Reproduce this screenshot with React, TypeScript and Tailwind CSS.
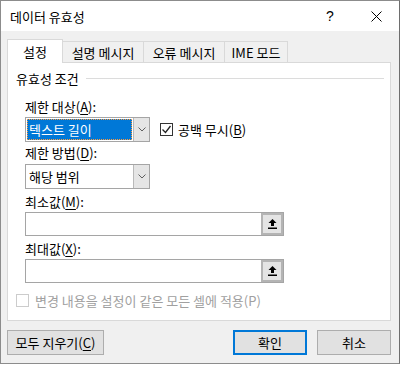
import React from "react";

const font = "font-['Malgun_Gothic','Noto_Sans_CJK_KR',sans-serif]";

function Key({ k }: { k: string }) {
  return <span className="underline underline-offset-[2px]">{k}</span>;
}

function Label({ text, k, className }: { text: string; k: string; className: string }) {
  return (
    <div className={`flex h-[16px] items-center ${className}`}>
      {text}(<Key k={k} />):
    </div>
  );
}

function Chevron() {
  return (
    <svg width="8" height="5" viewBox="0 0 8 5" fill="none">
      <path d="M0.5 0.5 L4 4 L7.5 0.5" stroke="#606060" strokeWidth="1" />
    </svg>
  );
}

function Combo({ value, focused }: { value: string; focused?: boolean }) {
  return (
    <div className="flex h-[25px] w-[125px] border border-[#a5a5a5] bg-white">
      <div className="flex flex-1 p-px">
        {focused ? (
          <div className="flex flex-1 items-center border border-dotted border-[#ff9a3c] bg-[#0078d7] pl-[1px] text-white">
            {value}
          </div>
        ) : (
          <div className="flex flex-1 items-center pl-[2px]">{value}</div>
        )}
      </div>
      <div className="flex w-[16px] items-center justify-center border-l border-[#b9b9b9] bg-[#e5e5e5]">
        <Chevron />
      </div>
    </div>
  );
}

function RefInput({ className }: { className: string }) {
  return (
    <div className={`flex h-[24px] w-[259px] border border-[#a5a5a5] bg-white ${className}`}>
      <div className="flex-1" />
      <div className="flex w-[22px] items-center justify-center border-2 border-[#b4b4b4] bg-[#e4e4e4]">
        <svg width="9" height="10" viewBox="0 0 9 10">
          <path d="M4.5 0 L8.5 4 H6 V7 H3 V4 H0.5 Z" fill="#000" />
          <rect x="0" y="8.5" width="9" height="1.5" fill="#000" />
        </svg>
      </div>
    </div>
  );
}

export default function App() {
  return (
    <div
      className={`flex h-[364px] w-[400px] flex-col border border-[#8c8c8c] border-r-[#6e6e6e] bg-[#f0f0f0] text-[13px] leading-none text-black ${font}`}
    >
      {/* Title bar */}
      <div className="flex h-[30px] items-center bg-white">
        <span className="pl-[9px]">데이터 유효성</span>
        <div className="ml-auto flex h-full">
          <div className="flex w-[46px] items-center justify-center font-['Liberation_Sans',sans-serif] text-[14px]">
            ?
          </div>
          <div className="flex w-[46px] items-center justify-center">
            <svg width="11" height="11" viewBox="0 0 11 11">
              <path d="M0.5 0.5 L10.5 10.5 M10.5 0.5 L0.5 10.5" stroke="#000" strokeWidth="1" />
            </svg>
          </div>
        </div>
      </div>

      <div className="flex flex-1 flex-col pl-[6px] pr-[8px]">
        {/* Tabs */}
        <div className="mt-[8px] flex h-[23px] items-end">
          <div className="relative z-10 -mb-px flex h-[24px] w-[56px] items-center justify-center border border-b-0 border-[#d9d9d9] bg-white pb-[1px]">
            설정
          </div>
          <div className="-ml-px flex h-[21px] w-[82px] items-center justify-center border border-b-0 border-[#d9d9d9] bg-[#f0f0f0]">
            설명 메시지
          </div>
          <div className="-ml-px flex h-[21px] w-[82px] items-center justify-center border border-b-0 border-[#d9d9d9] bg-[#f0f0f0]">
            오류 메시지
          </div>
          <div className="-ml-px flex h-[21px] w-[64px] items-center justify-center border border-b-0 border-[#d9d9d9] bg-[#f0f0f0]">
            IME 모드
          </div>
        </div>

        {/* Panel */}
        <div className="flex h-[259px] flex-col border border-[#d9d9d9] bg-white pl-[8px]">
          <div className="mt-[7px] flex h-[16px] items-center">
            <span>유효성 조건</span>
            <div className="ml-[7px] mr-[6px] h-px flex-1 bg-[#dcdcdc]" />
          </div>

          <div className="flex flex-col pl-[9px]">
            <Label text="제한 대상" k="A" className="mt-[12px]" />
            <div className="mt-[3px] flex items-center">
              <Combo value="텍스트 길이" focused />
              <div className="ml-[10px] flex items-center">
                <div className="flex h-[13px] w-[13px] items-center justify-center border border-[#333]">
                  <svg width="11" height="11" viewBox="0 0 11 11" fill="none">
                    <path d="M1.5 5.5 L4.5 8.5 L9.5 2" stroke="#222" strokeWidth="1.3" />
                  </svg>
                </div>
                <span className="ml-[5px]">
                  공백 무시(<Key k="B" />)
                </span>
              </div>
            </div>

            <Label text="제한 방법" k="D" className="mt-[2px]" />
            <div className="mt-[4px]">
              <Combo value="해당 범위" />
            </div>

            <Label text="최소값" k="M" className="mt-[4px]" />
            <RefInput className="mt-[3px]" />

            <Label text="최대값" k="X" className="mt-[4px]" />
            <RefInput className="mt-[3px]" />
          </div>

          <div className="mt-[10px] flex h-[15px] items-center text-[#a0a0a0]">
            <div className="h-[13px] w-[13px] border border-[#cccccc]" />
            <span className="ml-[6px]">변경 내용을 설정이 같은 모든 셀에 적용(P)</span>
          </div>
        </div>

        {/* Buttons */}
        <div className="mt-[9px] flex">
          <div className="flex h-[25px] w-[97px] items-center justify-center border border-[#adadad] bg-[#e1e1e1]">
            모두 지우기(<Key k="C" />)
          </div>
          <div className="ml-auto flex h-[25px] w-[74px] items-center justify-center border-2 border-[#0078d7] bg-[#e1e1e1]">
            확인
          </div>
          <div className="ml-[10px] flex h-[25px] w-[74px] items-center justify-center border border-[#adadad] bg-[#e1e1e1]">
            취소
          </div>
        </div>
      </div>
    </div>
  );
}
